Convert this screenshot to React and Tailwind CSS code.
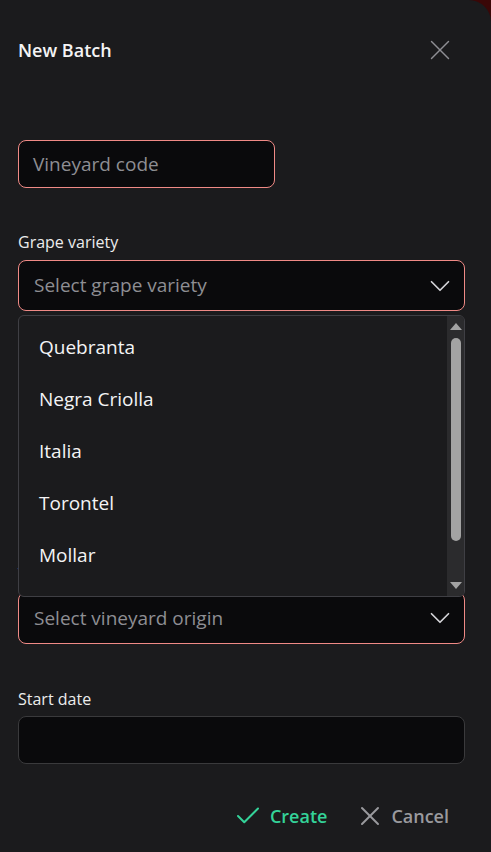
import { X, Check, ChevronDown } from "lucide-react";

const varieties = ["Quebranta", "Negra Criolla", "Italia", "Torontel", "Mollar"];

function Label({ children }) {
  return <div className="text-[16px] leading-5 text-[#ececec]">{children}</div>;
}

function SelectBox({ placeholder, className = "" }) {
  return (
    <div
      className={`flex items-center justify-between rounded-lg border border-[#f08a86] bg-[#0a0a0c] pl-[15px] pr-[7px] ${className}`}
    >
      <span className="text-[19px] text-[#8e8e93]">{placeholder}</span>
      <ChevronDown className="h-[34px] w-[34px] text-[#d4d4d8]" strokeWidth={1.2} />
    </div>
  );
}

function VarietyMenu() {
  return (
    <div className="absolute left-0 right-0 top-[55px] z-10 flex h-[282px] overflow-hidden rounded-md border border-[#3f3f44] bg-[#1b1b1d]">
      <ul className="flex-1 pt-[5px]">
        {varieties.map((v) => (
          <li key={v} className="flex h-[52px] items-center pl-5 text-[19px] text-[#f4f4f5]">
            {v}
          </li>
        ))}
      </ul>
      <div className="flex w-[17px] flex-col items-center bg-[#2b2b2d] py-[7px]">
        <div className="h-0 w-0 border-x-[6px] border-b-[7px] border-x-transparent border-b-[#a3a3a3]" />
        <div className="mt-[8px] h-[203px] w-[10px] rounded-full bg-[#a3a3a3]" />
        <div className="flex-1" />
        <div className="h-0 w-0 border-x-[6px] border-t-[7px] border-x-transparent border-t-[#a3a3a3]" />
      </div>
    </div>
  );
}

export default function App() {
  return (
    <div className="min-h-[852px] w-[491px] bg-[#3a0707]" style={{ fontFamily: "'Open Sans', 'Noto Sans', sans-serif" }}>
      <div className="min-h-[852px] rounded-tr-[22px] bg-[#1b1b1d] pl-[18px] pr-[26px]">
        <div className="flex h-[102px] items-center justify-between pb-[2px]">
          <h2 className="text-[18px] font-semibold text-[#f4f4f5]">New Batch</h2>
          <button className="mr-[8px] text-[#8e8e93]">
            <X className="h-[34px] w-[34px]" strokeWidth={1} />
          </button>
        </div>

        <div className="mt-[38px] flex h-[48px] w-[257px] items-center rounded-lg border border-[#f08a86] bg-[#0a0a0c] px-[14px]">
          <span className="text-[19px] text-[#8e8e93]">Vineyard code</span>
        </div>

        <div className="mt-[44px]">
          <Label>Grape variety</Label>
          <div className="relative mt-[8px]">
            <SelectBox placeholder="Select grape variety" className="h-[51px]" />
            <VarietyMenu />
          </div>
        </div>

        <div className="mt-[253px]">
          <Label>Vineyard origin</Label>
          <SelectBox placeholder="Select vineyard origin" className="mt-[8px] h-[52px]" />
        </div>

        <div className="mt-[45px]">
          <Label>Start date</Label>
          <div className="mt-[7px] h-[48px] rounded-lg border border-[#3a3a3c] bg-[#0a0a0c]" />
        </div>

        <div className="mt-[36px] flex h-[32px] items-center justify-end pr-[16px]">
          <button className="flex items-center gap-[7px] text-[18px] font-semibold text-[#34d399]">
            <Check className="h-[30px] w-[30px]" strokeWidth={1.6} />
            Create
          </button>
          <button className="ml-[27px] flex items-center gap-[5px] text-[18px] font-semibold text-[#9a9a9e]">
            <X className="h-[32px] w-[32px]" strokeWidth={1.5} />
            Cancel
          </button>
        </div>
      </div>
    </div>
  );
}
